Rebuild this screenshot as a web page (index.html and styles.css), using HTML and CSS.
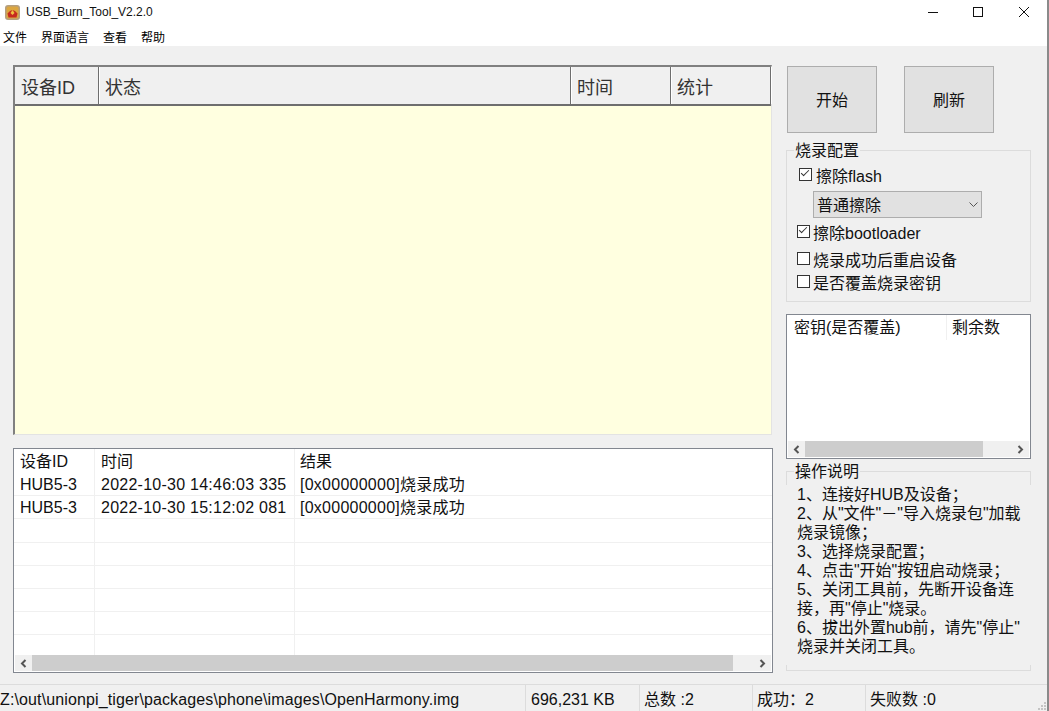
FILE: index.html
```html
<!DOCTYPE html>
<html lang="zh-CN">
<head>
  <meta charset="UTF-8" />
  <title>USB_Burn_Tool_V2.2.0</title>
  <link rel="stylesheet" href="styles.css">
</head>
<body>
<div class="window">

  <header class="titlebar">
    <svg class="app-icon" width="15" height="15" viewBox="0 0 15 15">
      <rect x="0" y="0" width="15" height="15" rx="3" fill="#b59f7e"/>
      <rect x="1.5" y="1.5" width="12" height="12" rx="2" fill="#dca63f"/>
      <path d="M2.5 8.5 Q7.5 1.5 12.5 8.5 L11.5 12.5 H3.5 Z" fill="#c62a1f"/>
      <path d="M5.5 8 L7.5 5 L9.5 8 L7.5 10 Z" fill="#f0c040"/>
    </svg>
    <span class="app-title">USB_Burn_Tool_V2.2.0</span>
    <div class="caption-btns">
      <svg width="10" height="10" viewBox="0 0 10 10"><path d="M0 5.5H10" stroke="#111" fill="none"/></svg>
      <svg width="10" height="10" viewBox="0 0 10 10"><rect x="0.5" y="0.5" width="9" height="9" stroke="#111" fill="none"/></svg>
      <svg width="10" height="10" viewBox="0 0 10 10"><path d="M0 0L10 10M10 0L0 10" stroke="#111" fill="none"/></svg>
    </div>
  </header>

  <nav class="menubar">
    <span>文件</span>
    <span>界面语言</span>
    <span>查看</span>
    <span>帮助</span>
  </nav>

  <main class="content">
    <div class="left-col">
      <section class="device-table">
        <div class="device-head">
          <div class="dh dh-id">设备ID</div>
          <div class="dh dh-state">状态</div>
          <div class="dh dh-time">时间</div>
          <div class="dh dh-count">统计</div>
        </div>
        <div class="device-body"></div>
      </section>

      <section class="log-table">
        <div class="log-rows">
          <div class="log-row log-head"><div>设备ID</div><div>时间</div><div>结果</div></div>
          <div class="log-row"><div>HUB5-3</div><div class="num">2022-10-30 14:46:03 335</div><div class="num">[0x00000000]烧录成功</div></div>
          <div class="log-row"><div>HUB5-3</div><div class="num">2022-10-30 15:12:02 081</div><div class="num">[0x00000000]烧录成功</div></div>
          <div class="log-row"><div></div><div></div><div></div></div>
          <div class="log-row"><div></div><div></div><div></div></div>
          <div class="log-row"><div></div><div></div><div></div></div>
          <div class="log-row"><div></div><div></div><div></div></div>
          <div class="log-row"><div></div><div></div><div></div></div>
          <div class="log-row log-last"><div></div><div></div><div></div></div>
        </div>
        <div class="hscroll">
          <svg class="arrow" width="7" height="9" viewBox="0 0 7 9"><path d="M5.5 1L2 4.5L5.5 8" stroke="#555" stroke-width="2" fill="none"/></svg>
          <div class="track"><div class="thumb thumb-log"></div></div>
          <svg class="arrow" width="7" height="9" viewBox="0 0 7 9"><path d="M1.5 1L5 4.5L1.5 8" stroke="#555" stroke-width="2" fill="none"/></svg>
        </div>
      </section>
    </div>

    <aside class="right-col">
      <div class="action-btns">
        <button class="big-btn">开始</button>
        <button class="big-btn">刷新</button>
      </div>

      <fieldset class="group config">
        <legend>烧录配置</legend>
        <label class="check check-flash"><span class="box on"></span>擦除flash</label>
        <div class="select">普通擦除
          <svg width="9" height="6" viewBox="0 0 9 6"><path d="M0.5 0.5L4.5 4.5L8.5 0.5" stroke="#555" fill="none"/></svg>
        </div>
        <label class="check"><span class="box on"></span>擦除bootloader</label>
        <label class="check check-restart"><span class="box"></span>烧录成功后重启设备</label>
        <label class="check"><span class="box"></span>是否覆盖烧录密钥</label>
      </fieldset>

      <section class="key-list">
        <div class="key-head"><div class="key-a">密钥(是否覆盖)</div><div class="key-b">剩余数</div></div>
        <div class="key-body"></div>
        <div class="hscroll">
          <svg class="arrow" width="7" height="9" viewBox="0 0 7 9"><path d="M5.5 1L2 4.5L5.5 8" stroke="#555" stroke-width="2" fill="none"/></svg>
          <div class="track"><div class="thumb thumb-key"></div></div>
          <svg class="arrow" width="7" height="9" viewBox="0 0 7 9"><path d="M1.5 1L5 4.5L1.5 8" stroke="#555" stroke-width="2" fill="none"/></svg>
        </div>
      </section>

      <fieldset class="group help">
        <legend>操作说明</legend>
        <p>1、连接好HUB及设备；<br>
        2、从"文件"－"导入烧录包"加载<br>烧录镜像；<br>
        3、选择烧录配置；<br>
        4、点击"开始"按钮启动烧录；<br>
        5、关闭工具前，先断开设备连<br>接，再"停止"烧录。<br>
        6、拔出外置hub前，请先"停止"<br>烧录并关闭工具。</p>
      </fieldset>
    </aside>
  </main>

  <footer class="statusbar">
    <div class="st st-path">Z:\out\unionpi_tiger\packages\phone\images\OpenHarmony.img</div>
    <div class="st st-size">696,231 KB</div>
    <div class="st st-total">总数 :2</div>
    <div class="st st-ok">成功：2</div>
    <div class="st st-fail">失败数 :0
      <svg class="grip" width="9" height="9" viewBox="0 0 9 9">
        <path d="M6 0h2v2H6zM3 3h2v2H3zM6 3h2v2H6zM0 6h2v2H0zM3 6h2v2H3zM6 6h2v2H6z" fill="#c4c4c4"/>
      </svg>
    </div>
  </footer>

</div>
</body>
</html>
```

FILE: styles.css
```css
html, body {
  margin: 0;
  padding: 0;
  height: 100%;
  background: #8a8a8a;
}

body {
  font-family: "Liberation Sans", "Noto Sans CJK SC", sans-serif;
  font-size: 16px;
  color: #111;
  overflow: hidden;
}

.window {
  width: 1047px;
  height: 711px;
  display: flex;
  flex-direction: column;
  background: #f0f0f0;
}

.titlebar {
  height: 26px;
  box-sizing: border-box;
  padding: 0 0 2px 5px;
  display: flex;
  align-items: center;
  background: #fff;
  font-size: 12px;
}

.app-icon {
  margin-right: 6px;
}

.caption-btns {
  margin-left: auto;
  display: flex;
  gap: 35px;
  padding-right: 18px;
}

.caption-btns svg:last-child {
  margin-left: 1px;
}

.menubar {
  height: 20px;
  display: flex;
  align-items: center;
  gap: 14px;
  background: #fff;
  padding-left: 3px;
  font-size: 12px;
  color: #000;
}

.content {
  flex: 1;
  display: flex;
  padding: 19px 16px 0 13px;
  min-height: 0;
}

.left-col {
  width: 760px;
  display: flex;
  flex-direction: column;
  margin-right: 13px;
}

.device-table {
  height: 370px;
  margin-right: 1px;
  display: flex;
  flex-direction: column;
  border-top: 2px solid #808080;
  border-left: 2px solid #808080;
  border-right: 1px solid #e3e3e3;
  border-bottom: 1px solid #e3e3e3;
  box-sizing: border-box;
}

.device-head {
  height: 39px;
  display: flex;
  flex: none;
  box-sizing: border-box;
  border-bottom: 2px solid #6e6e6e;
  background: #f0f0f0;
  font-size: 18px;
  color: #333;
}

.dh {
  display: flex;
  align-items: center;
  padding-left: 6px;
  box-sizing: border-box;
  border-right: 1px solid #6e6e6e;
  box-shadow: 1px 0 0 #fff;
}

.dh-id { width: 84px; }
.dh-state { width: 472px; }
.dh-time { width: 100px; }
.dh-count { width: 100px; }

.device-body {
  flex: 1;
  background: #ffffe0;
}

.log-table {
  margin-top: 13px;
  height: 225px;
  box-sizing: border-box;
  border: 1px solid #828790;
  background: #fff;
  display: flex;
  flex-direction: column;
}

.log-rows {
  flex: 1;
  min-height: 0;
  overflow: hidden;
}

.log-row {
  display: grid;
  grid-template-columns: 81px 200px 1fr;
  height: 23.2px;
  box-sizing: border-box;
  border-bottom: 1px solid #f0f0f0;
  line-height: 24px;
}

.log-row > div {
  padding-left: 6px;
  border-right: 1px solid #f0f0f0;
  white-space: nowrap;
  overflow: hidden;
}

.log-row > div:last-child {
  padding-left: 5px;
  border-right: 0;
}

.log-row > .num {
  letter-spacing: 0.25px;
}

.log-head {
  height: 24px;
  line-height: 25px;
  border-bottom: 0;
}

.log-last {
  border-bottom: 0;
}

.hscroll {
  height: 16px;
  flex: none;
  display: flex;
  align-items: center;
  background: #f0f0f0;
  margin: 0 1px 1px;
}

.arrow {
  flex: none;
  width: 17px;
}

.track {
  flex: 1;
  height: 100%;
}

.thumb {
  height: 100%;
  background: #cdcdcd;
}

.thumb-log { width: 701px; }
.thumb-key { width: 178px; }

.right-col {
  width: 245px;
  display: flex;
  flex-direction: column;
}

.action-btns {
  display: flex;
  gap: 27px;
  height: 67px;
  flex: none;
  margin-top: 1px;
  padding-left: 1px;
}

.big-btn {
  width: 90px;
  height: 67px;
  padding: 0 0 2px;
  background: #e1e1e1;
  border: 1px solid #adadad;
  font: inherit;
  color: #111;
}

.group {
  margin: 0;
  padding: 0;
  border: 1px solid #dcdcdc;
  box-sizing: border-box;
}

.group legend {
  margin-left: -3px;
  padding: 2px 1px 0;
  line-height: 18px;
}

.config {
  margin-top: 7px;
  height: 162px;
  padding: 3px 0 0 10px;
}

.check {
  display: flex;
  align-items: center;
  height: 23px;
  gap: 3px;
}

.check-flash {
  padding-left: 2px;
  gap: 4px;
}

.box {
  width: 11px;
  height: 11px;
  border: 1px solid #333;
  background: #fff;
  position: relative;
  flex: none;
}

.box.on::after {
  content: "";
  position: absolute;
  left: 1px;
  top: 1px;
  width: 7px;
  height: 3px;
  border-left: 1px solid #333;
  border-bottom: 1px solid #333;
  transform: rotate(-45deg);
}

.select {
  margin: 5px 0 2px 16px;
  width: 169px;
  height: 27px;
  box-sizing: border-box;
  border: 1px solid #adadad;
  background: #e1e1e1;
  padding: 0 3px 2px 3px;
  display: flex;
  align-items: center;
  justify-content: space-between;
}

.select svg {
  margin-top: 2px;
}

.check-restart { margin-top: 4px; }

.key-list {
  margin-top: 12px;
  height: 145px;
  flex: none;
  box-sizing: border-box;
  border: 1px solid #828790;
  background: #fff;
  display: flex;
  flex-direction: column;
}

.key-head {
  display: flex;
  height: 25px;
  line-height: 25px;
}

.key-a {
  width: 152px;
  padding-left: 7px;
  border-right: 1px solid #f0f0f0;
}

.key-b {
  padding-left: 5px;
}

.key-body {
  flex: 1;
}

.help {
  margin-top: 2px;
  height: 210px;
  padding: 4px 0 0 10px;
}

/* the text box sits on top of the group border, hiding its sides */
.help p {
  margin: 0 -1px 0 -11px;
  padding-left: 11px;
  height: 180px;
  line-height: 19px;
  background: #f0f0f0;
}

.statusbar {
  height: 27px;
  flex: none;
  display: flex;
  border-top: 1px solid #dcdcdc;
  box-sizing: border-box;
  line-height: 29px;
  overflow: hidden;
}

.st {
  box-sizing: border-box;
  border-right: 1px solid #dcdcdc;
  white-space: nowrap;
  padding-left: 4px;
}

.st-path {
  width: 526px;
  padding-left: 0;
  letter-spacing: 0.12px;
}

.st-size { width: 114px; padding-left: 5px; }
.st-total { width: 113px; }
.st-ok { width: 113px; }

.st-fail {
  flex: 1;
  border-right: 0;
  position: relative;
}

.grip {
  position: absolute;
  right: 0;
  bottom: 0;
}
```
